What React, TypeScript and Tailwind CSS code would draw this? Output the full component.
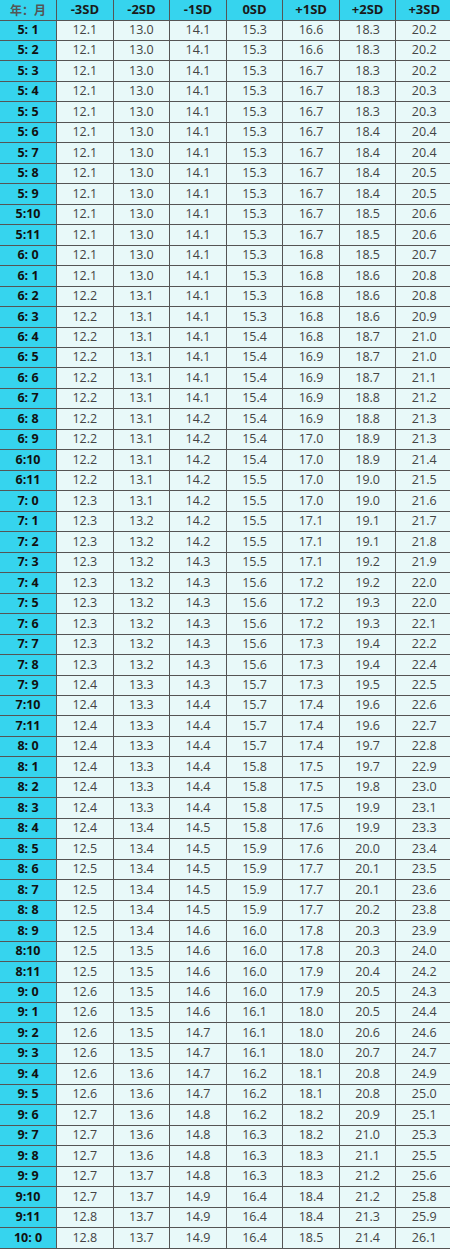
const headers = ["-3SD", "-2SD", "-1SD", "0SD", "+1SD", "+2SD", "+3SD"];

// 年:月, -3SD .. +3SD
const rows: [string, ...string[]][] = [
  ["5: 1", "12.1", "13.0", "14.1", "15.3", "16.6", "18.3", "20.2"],
  ["5: 2", "12.1", "13.0", "14.1", "15.3", "16.6", "18.3", "20.2"],
  ["5: 3", "12.1", "13.0", "14.1", "15.3", "16.7", "18.3", "20.2"],
  ["5: 4", "12.1", "13.0", "14.1", "15.3", "16.7", "18.3", "20.3"],
  ["5: 5", "12.1", "13.0", "14.1", "15.3", "16.7", "18.3", "20.3"],
  ["5: 6", "12.1", "13.0", "14.1", "15.3", "16.7", "18.4", "20.4"],
  ["5: 7", "12.1", "13.0", "14.1", "15.3", "16.7", "18.4", "20.4"],
  ["5: 8", "12.1", "13.0", "14.1", "15.3", "16.7", "18.4", "20.5"],
  ["5: 9", "12.1", "13.0", "14.1", "15.3", "16.7", "18.4", "20.5"],
  ["5:10", "12.1", "13.0", "14.1", "15.3", "16.7", "18.5", "20.6"],
  ["5:11", "12.1", "13.0", "14.1", "15.3", "16.7", "18.5", "20.6"],
  ["6: 0", "12.1", "13.0", "14.1", "15.3", "16.8", "18.5", "20.7"],
  ["6: 1", "12.1", "13.0", "14.1", "15.3", "16.8", "18.6", "20.8"],
  ["6: 2", "12.2", "13.1", "14.1", "15.3", "16.8", "18.6", "20.8"],
  ["6: 3", "12.2", "13.1", "14.1", "15.3", "16.8", "18.6", "20.9"],
  ["6: 4", "12.2", "13.1", "14.1", "15.4", "16.8", "18.7", "21.0"],
  ["6: 5", "12.2", "13.1", "14.1", "15.4", "16.9", "18.7", "21.0"],
  ["6: 6", "12.2", "13.1", "14.1", "15.4", "16.9", "18.7", "21.1"],
  ["6: 7", "12.2", "13.1", "14.1", "15.4", "16.9", "18.8", "21.2"],
  ["6: 8", "12.2", "13.1", "14.2", "15.4", "16.9", "18.8", "21.3"],
  ["6: 9", "12.2", "13.1", "14.2", "15.4", "17.0", "18.9", "21.3"],
  ["6:10", "12.2", "13.1", "14.2", "15.4", "17.0", "18.9", "21.4"],
  ["6:11", "12.2", "13.1", "14.2", "15.5", "17.0", "19.0", "21.5"],
  ["7: 0", "12.3", "13.1", "14.2", "15.5", "17.0", "19.0", "21.6"],
  ["7: 1", "12.3", "13.2", "14.2", "15.5", "17.1", "19.1", "21.7"],
  ["7: 2", "12.3", "13.2", "14.2", "15.5", "17.1", "19.1", "21.8"],
  ["7: 3", "12.3", "13.2", "14.3", "15.5", "17.1", "19.2", "21.9"],
  ["7: 4", "12.3", "13.2", "14.3", "15.6", "17.2", "19.2", "22.0"],
  ["7: 5", "12.3", "13.2", "14.3", "15.6", "17.2", "19.3", "22.0"],
  ["7: 6", "12.3", "13.2", "14.3", "15.6", "17.2", "19.3", "22.1"],
  ["7: 7", "12.3", "13.2", "14.3", "15.6", "17.3", "19.4", "22.2"],
  ["7: 8", "12.3", "13.2", "14.3", "15.6", "17.3", "19.4", "22.4"],
  ["7: 9", "12.4", "13.3", "14.3", "15.7", "17.3", "19.5", "22.5"],
  ["7:10", "12.4", "13.3", "14.4", "15.7", "17.4", "19.6", "22.6"],
  ["7:11", "12.4", "13.3", "14.4", "15.7", "17.4", "19.6", "22.7"],
  ["8: 0", "12.4", "13.3", "14.4", "15.7", "17.4", "19.7", "22.8"],
  ["8: 1", "12.4", "13.3", "14.4", "15.8", "17.5", "19.7", "22.9"],
  ["8: 2", "12.4", "13.3", "14.4", "15.8", "17.5", "19.8", "23.0"],
  ["8: 3", "12.4", "13.3", "14.4", "15.8", "17.5", "19.9", "23.1"],
  ["8: 4", "12.4", "13.4", "14.5", "15.8", "17.6", "19.9", "23.3"],
  ["8: 5", "12.5", "13.4", "14.5", "15.9", "17.6", "20.0", "23.4"],
  ["8: 6", "12.5", "13.4", "14.5", "15.9", "17.7", "20.1", "23.5"],
  ["8: 7", "12.5", "13.4", "14.5", "15.9", "17.7", "20.1", "23.6"],
  ["8: 8", "12.5", "13.4", "14.5", "15.9", "17.7", "20.2", "23.8"],
  ["8: 9", "12.5", "13.4", "14.6", "16.0", "17.8", "20.3", "23.9"],
  ["8:10", "12.5", "13.5", "14.6", "16.0", "17.8", "20.3", "24.0"],
  ["8:11", "12.5", "13.5", "14.6", "16.0", "17.9", "20.4", "24.2"],
  ["9: 0", "12.6", "13.5", "14.6", "16.0", "17.9", "20.5", "24.3"],
  ["9: 1", "12.6", "13.5", "14.6", "16.1", "18.0", "20.5", "24.4"],
  ["9: 2", "12.6", "13.5", "14.7", "16.1", "18.0", "20.6", "24.6"],
  ["9: 3", "12.6", "13.5", "14.7", "16.1", "18.0", "20.7", "24.7"],
  ["9: 4", "12.6", "13.6", "14.7", "16.2", "18.1", "20.8", "24.9"],
  ["9: 5", "12.6", "13.6", "14.7", "16.2", "18.1", "20.8", "25.0"],
  ["9: 6", "12.7", "13.6", "14.8", "16.2", "18.2", "20.9", "25.1"],
  ["9: 7", "12.7", "13.6", "14.8", "16.3", "18.2", "21.0", "25.3"],
  ["9: 8", "12.7", "13.6", "14.8", "16.3", "18.3", "21.1", "25.5"],
  ["9: 9", "12.7", "13.7", "14.8", "16.3", "18.3", "21.2", "25.6"],
  ["9:10", "12.7", "13.7", "14.9", "16.4", "18.4", "21.2", "25.8"],
  ["9:11", "12.8", "13.7", "14.9", "16.4", "18.4", "21.3", "25.9"],
  ["10: 0", "12.8", "13.7", "14.9", "16.4", "18.5", "21.4", "26.1"],
];

export default function App() {
  return (
    <div className="w-[450px] overflow-hidden bg-white font-['Open_Sans','Noto_Sans_CJK_SC',sans-serif]">
      <table className="w-[453px] table-fixed border-collapse leading-none">
        <thead>
          <tr className="h-[20px] bg-[#36d4ee] text-[13px]">
            <th className="border-r border-b border-[#555] font-bold text-[#555] font-['Noto_Sans_CJK_SC',sans-serif] text-[12px]">
              年：月
            </th>
            {headers.map((h) => (
              <th key={h} className="border border-t-0 border-[#555] font-bold text-[#1a1a1a]">
                {h}
              </th>
            ))}
          </tr>
        </thead>
        <tbody>
          {rows.map(([label, ...vals]) => (
            <tr key={label} className="h-[20.47px]">
              <td className="border-r border-b border-[#555] bg-[#36d4ee] text-center text-[12.5px] font-bold text-[#111] whitespace-pre">
                {label}
              </td>
              {vals.map((v, i) => (
                <td key={i} className="border border-[#555] bg-[#e8f9f9] text-center text-[12.5px] text-[#444]">
                  {v}
                </td>
              ))}
            </tr>
          ))}
        </tbody>
      </table>
    </div>
  );
}
